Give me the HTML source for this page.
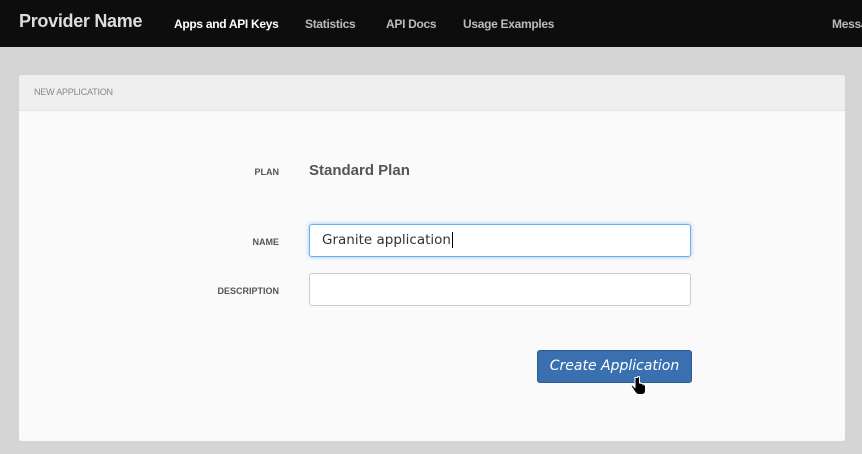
<!DOCTYPE html>
<html><head><style>
body{margin:0;width:862px;height:454px;background:#d5d5d5;font-family:"Liberation Sans",sans-serif;overflow:hidden;position:relative}
.nav{position:absolute;left:0;top:0;width:862px;height:47px;background:#0d0d0d}
.brand{position:absolute;left:19px;top:11px;color:#ddd;font-size:18px;font-weight:bold;letter-spacing:-0.3px}
.nl{position:absolute;top:17px;font-size:12px;font-weight:bold;color:#bbb;letter-spacing:-0.3px}
.panel{position:absolute;left:19px;top:75px;width:826px;height:366px;background:#fafafa;border-radius:3px;overflow:hidden}
.ph{height:35px;background:#efefef;border-bottom:1px solid #e6e6e6}
.ph span{position:absolute;left:15px;top:12px;font-size:9px;color:#888;letter-spacing:-0.2px}
.lbl{position:absolute;font-size:9px;font-weight:bold;color:#555;text-align:right;width:120px}
.inp{position:absolute;left:290px;width:382px;height:33px;border:1px solid #ccc;border-radius:3px;background:#fff;box-sizing:border-box}
.btn{position:absolute;left:518px;top:275px;width:155px;height:33px;background:#3a70b0;border:1px solid #2c5a92;border-radius:3px;box-sizing:border-box;color:#fff;font-family:"DejaVu Sans",sans-serif;font-style:italic;font-size:14px;text-align:center;line-height:31px}
</style></head><body>
<div class="nav">
<div class="brand">Provider Name</div>
<div class="nl" style="left:174px;color:#fff">Apps and API Keys</div>
<div class="nl" style="left:305px">Statistics</div>
<div class="nl" style="left:386px">API Docs</div>
<div class="nl" style="left:463px">Usage Examples</div>
<div class="nl" style="left:832px">Messa</div>
</div>
<div class="panel">
<div class="ph"><span>NEW APPLICATION</span></div>
<div class="lbl" style="left:140px;top:92px">PLAN</div>
<div style="position:absolute;left:290px;top:87px;font-size:15px;font-weight:bold;color:#555">Standard Plan</div>
<div class="lbl" style="left:140px;top:162px">NAME</div>
<div class="inp" style="top:149px;border-color:#66aff0;box-shadow:0 0 4px rgba(80,160,240,.6)"><span style="position:absolute;left:12px;top:7px;font-family:'DejaVu Sans',sans-serif;font-size:13.5px;color:#333">Granite application<span style="border-left:1px solid #000;margin-left:1px"></span></span></div>
<div class="lbl" style="left:140px;top:211px">DESCRIPTION</div>
<div class="inp" style="top:198px"></div>
<div class="btn">Create Application</div>
<svg style="position:absolute;left:612px;top:301px" width="18" height="20" viewBox="0 0 18 20"><path d="M4 1.5v10l-2-2c-1-1-2.5 0-1.5 1.2L4 16c1 1.5 2 2.5 4 2.5h3c2 0 3.5-1.5 3.5-4V9.5c0-1-1.5-1-1.5 0V8.5c0-1-1.5-1-1.5 0V8c0-1-1.5-1-1.5 0V7.5c0-1-1.5-1-1.5 0V1.5c0-1.3-2-1.3-2 0z" fill="#000" stroke="#fff" stroke-width="1"/></svg>
</div>
</body></html>
